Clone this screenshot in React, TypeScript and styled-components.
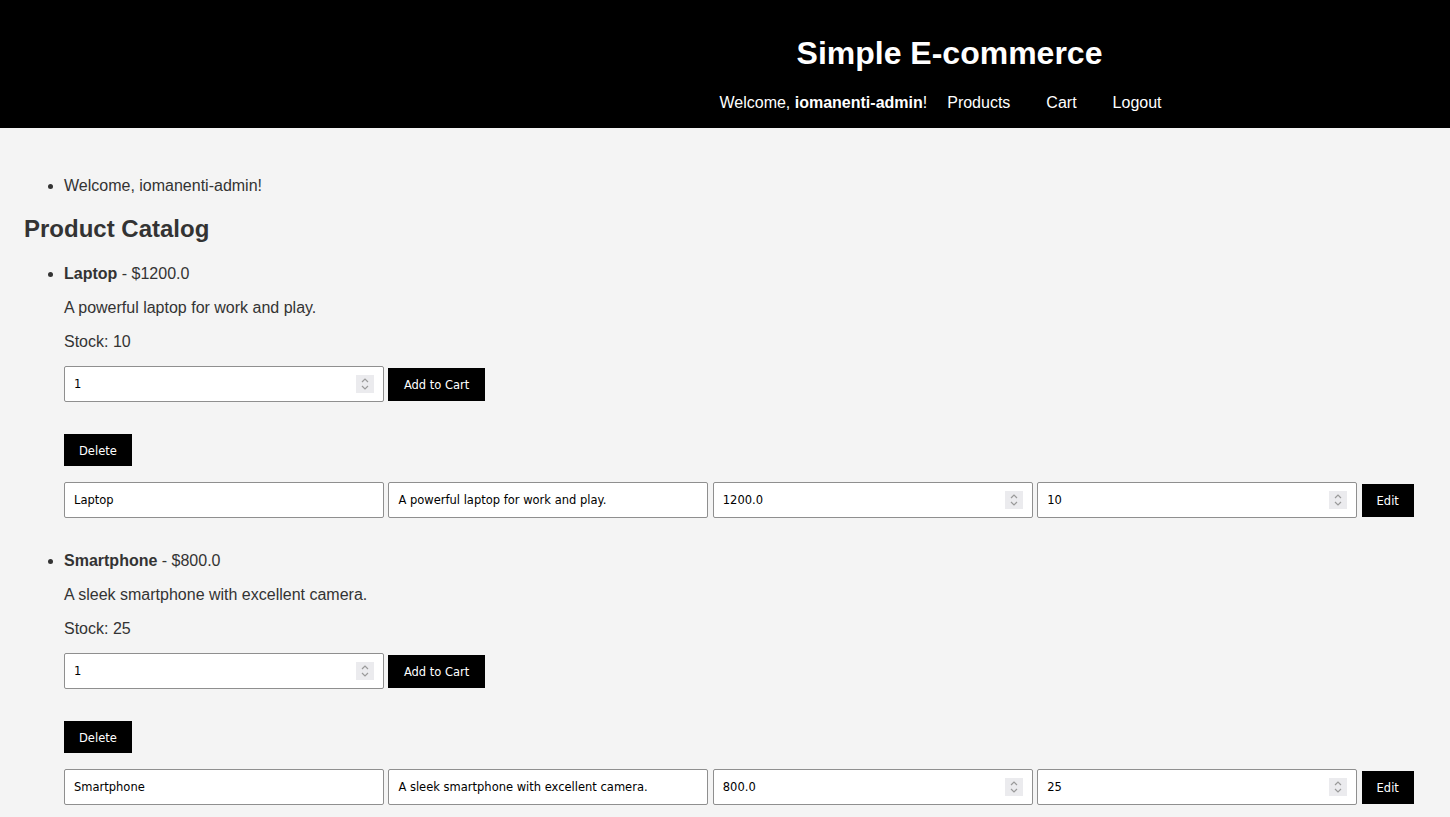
import React from "react";
import styled, { createGlobalStyle } from "styled-components";

const Global = createGlobalStyle`
  html, body { margin: 0; padding: 0; }
  body {
    background: #f4f4f4;
    color: #333;
    font-family: "Liberation Sans", Arial, sans-serif;
    font-size: 16px;
  }
  input[type=number]::-webkit-inner-spin-button,
  input[type=number]::-webkit-outer-spin-button { -webkit-appearance: none; margin: 0; }
  input[type=number] { -moz-appearance: textfield; }
`;

const Header = styled.header`
  background: #000;
  color: #fff;
  padding: 35px 0 16px 449px;
  height: 128px;
  box-sizing: border-box;
  text-align: center;
`;

const Title = styled.h1`
  margin: 0 0 22px;
  font-size: 32px;
  line-height: 37px;
  font-weight: bold;
`;

const Nav = styled.nav`
  display: flex;
  justify-content: center;
  line-height: 18px;
`;

const NavWelcome = styled.span`
  margin-right: 2px;
`;

const NavLink = styled.a`
  color: #fff;
  text-decoration: none;
  padding: 0 18px;
`;

const Main = styled.main`
  padding: 33px 24px 0;
`;

const List = styled.ul`
  margin: 0;
  padding-left: 40px;
`;

const FlashList = styled(List)`
  margin-top: 16px;
  li { line-height: 18px; }
`;

const Heading = styled.h2`
  margin: 20px 0 22px;
  font-size: 24px;
  line-height: 28px;
`;

const Item = styled.li`
  line-height: 18px;
  margin-bottom: 34px;
`;

const Para = styled.p`
  margin: 16px 0 15px;
  line-height: 18px;
`;

const Row = styled.form<{ $mt?: number }>`
  display: flex;
  align-items: center;
  gap: 4.4px;
  margin-top: ${(p) => p.$mt ?? 16}px;
`;

const Field = styled.div`
  position: relative;
  display: flex;
`;

const Input = styled.input`
  width: 320px;
  height: 36px;
  box-sizing: border-box;
  padding: 0 9px;
  border: 1px solid #8f8f8f;
  border-radius: 2px;
  background: #fff;
  font-family: "DejaVu Sans", Verdana, sans-serif;
  font-size: 11.5px;
  color: #000;
  outline: none;
`;

const Spinner = styled.span`
  position: absolute;
  right: 10px;
  top: 9px;
  width: 18px;
  height: 18px;
  background: #ebebee;
  display: flex;
  align-items: center;
  justify-content: center;
`;

const Button = styled.button<{ $h?: number; $px?: number }>`
  background: #000;
  color: #fff;
  border: none;
  height: ${(p) => p.$h ?? 33}px;
  padding: 1px ${(p) => p.$px ?? 15}px 0;
  font-family: "DejaVu Sans", Verdana, sans-serif;
  font-size: 11.5px;
  cursor: pointer;
`;

const NumberField = ({ value }: { value: string }) => (
  <Field>
    <Input type="number" defaultValue={value} />
    <Spinner>
      <svg width="10" height="14" viewBox="0 0 10 14" fill="none" stroke="#9a9a9a" strokeWidth="1.2">
        <path d="M2 5 L5 2 L8 5" />
        <path d="M2 9 L5 12 L8 9" />
      </svg>
    </Spinner>
  </Field>
);

const TextField = ({ value }: { value: string }) => (
  <Field>
    <Input type="text" defaultValue={value} />
  </Field>
);

type Product = { name: string; price: string; desc: string; stock: string };

const products: Product[] = [
  { name: "Laptop", price: "1200.0", desc: "A powerful laptop for work and play.", stock: "10" },
  { name: "Smartphone", price: "800.0", desc: "A sleek smartphone with excellent camera.", stock: "25" },
];

const ProductItem = ({ p }: { p: Product }) => (
  <Item>
    <strong>{p.name}</strong> - ${p.price}
    <Para>{p.desc}</Para>
    <Para>Stock: {p.stock}</Para>
    <Row $mt={15} onSubmit={(e) => e.preventDefault()}>
      <NumberField value="1" />
      <Button type="submit" $px={15.5}>Add to Cart</Button>
    </Row>
    <Row $mt={32} onSubmit={(e) => e.preventDefault()}>
      <Button type="submit" $h={32}>Delete</Button>
    </Row>
    <Row onSubmit={(e) => e.preventDefault()}>
      <TextField value={p.name} />
      <TextField value={p.desc} />
      <NumberField value={p.price} />
      <NumberField value={p.stock} />
      <Button type="submit">Edit</Button>
    </Row>
  </Item>
);

export default function App() {
  return (
    <>
      <Global />
      <Header>
        <Title>Simple E-commerce</Title>
        <Nav>
          <NavWelcome>
            Welcome, <strong>iomanenti-admin</strong>!
          </NavWelcome>
          <NavLink href="#">Products</NavLink>
          <NavLink href="#">Cart</NavLink>
          <NavLink href="#">Logout</NavLink>
        </Nav>
      </Header>
      <Main>
        <FlashList>
          <li>Welcome, iomanenti-admin!</li>
        </FlashList>
        <Heading>Product Catalog</Heading>
        <List>
          {products.map((p) => (
            <ProductItem key={p.name} p={p} />
          ))}
        </List>
      </Main>
    </>
  );
}
